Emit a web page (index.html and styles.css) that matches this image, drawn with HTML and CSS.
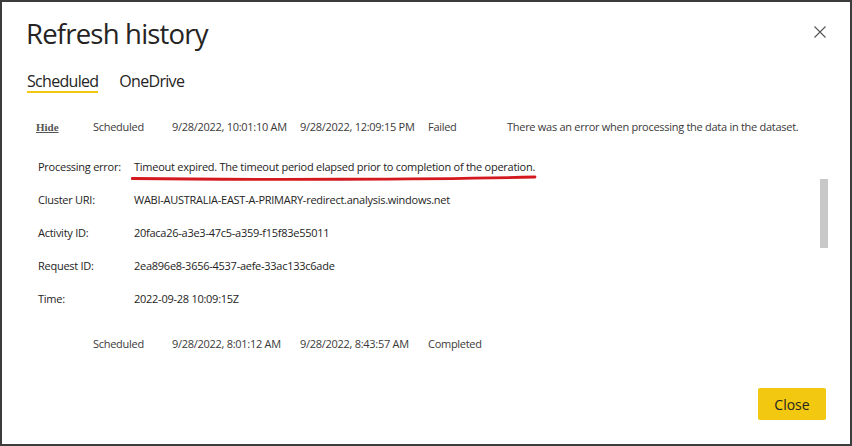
FILE: index.html
```html
<!DOCTYPE html>
<html lang="en">
<head>
<meta charset="utf-8">
<title>Refresh history</title>
<link rel="stylesheet" href="styles.css">
</head>
<body>
<div class="frame">
  <div class="header">
    <h1 class="title">Refresh history</h1>
    <button class="close-x" aria-label="Close">
      <svg width="12" height="12" viewBox="0 0 12 12"><path d="M0.5 0.5 L11.5 11.5 M11.5 0.5 L0.5 11.5" stroke="#555" stroke-width="1.1" fill="none"/></svg>
    </button>
  </div>
  <div class="tabs">
    <span class="tab active">Scheduled</span>
    <span class="tab">OneDrive</span>
  </div>
  <div class="main">
    <div class="list">
      <div class="row">
        <span class="c-hide"><a class="hide">Hide</a></span>
        <span class="c-type">Scheduled</span>
        <span class="c-start">9/28/2022, 10:01:10 AM</span>
        <span class="c-end">9/28/2022, 12:09:15 PM</span>
        <span class="c-status">Failed</span>
        <span class="c-msg">There was an error when processing the data in the dataset.</span>
      </div>
      <div class="details">
        <div class="drow"><span class="dlabel">Processing error:</span><span class="dval err">Timeout expired. The timeout period elapsed prior to completion of the operation.<svg class="scribble" width="410" height="8" viewBox="0 0 410 8"><path d="M1 4.5 C 120 6, 300 5.5, 404 3" stroke="#d3181e" stroke-width="2.8" fill="none" stroke-linecap="round"/></svg></span></div>
        <div class="drow"><span class="dlabel">Cluster URI:</span><span class="dval">WABI-AUSTRALIA-EAST-A-PRIMARY-redirect.analysis.windows.net</span></div>
        <div class="drow"><span class="dlabel">Activity ID:</span><span class="dval">20faca26-a3e3-47c5-a359-f15f83e55011</span></div>
        <div class="drow"><span class="dlabel">Request ID:</span><span class="dval">2ea896e8-3656-4537-aefe-33ac133c6ade</span></div>
        <div class="drow"><span class="dlabel">Time:</span><span class="dval">2022-09-28 10:09:15Z</span></div>
      </div>
      <div class="row row2">
        <span class="c-hide"></span>
        <span class="c-type">Scheduled</span>
        <span class="c-start">9/28/2022, 8:01:12 AM</span>
        <span class="c-end">9/28/2022, 8:43:57 AM</span>
        <span class="c-status">Completed</span>
        <span class="c-msg"></span>
      </div>
    </div>
    <div class="scrollbar"><div class="thumb"></div></div>
  </div>
  <div class="footer">
    <button class="btn-close">Close</button>
  </div>
</div>
</body>
</html>
```

FILE: styles.css
```css
* { box-sizing: border-box; }
html, body { margin: 0; padding: 0; background: #fff; }
body { font-family: "Open Sans", "Noto Sans", sans-serif; color: #333; }

.frame {
  width: 852px;
  height: 446px;
  border: 2px solid #3c3c3c;
  background: #fff;
  display: flex;
  flex-direction: column;
}

.header {
  display: flex;
  justify-content: space-between;
  align-items: flex-start;
  padding: 14px 24px 0 24px;
}
.title {
  margin: 0;
  font-weight: 400;
  font-size: 27.5px;
  line-height: 36px;
  color: #252423;
  letter-spacing: -0.8px;
}
.close-x {
  border: 0;
  background: none;
  padding: 0;
  margin-top: 10px;
  margin-right: 0;
  width: 12px;
  height: 12px;
  display: flex;
}

.tabs {
  display: flex;
  gap: 21px;
  padding-left: 25px;
  margin-top: 19px;
}
.tab {
  font-size: 16px;
  line-height: 20px;
  color: #252423;
  padding-bottom: 0;
  border-bottom: 2px solid transparent;
  letter-spacing: -0.7px;
}
.tab.active { border-bottom-color: #f2c811; }

.main {
  flex: 1;
  display: flex;
}
.list {
  flex: 1;
  padding-top: 26px;
}
.scrollbar {
  width: 8px;
  margin-right: 22px;
}
.thumb {
  margin-top: 86px;
  height: 69px;
  background: #c8c8c8;
}

.row {
  display: grid;
  grid-template-columns: 57px 79px 128px 128px 79px 1fr;
  padding-left: 34px;
  font-size: 11px;
  line-height: 16px;
  letter-spacing: -0.28px;
  color: #3b3a39;
  white-space: nowrap;
}
.row2 { margin-top: 21px; }

.hide {
  font-family: "Liberation Serif", "Times New Roman", serif;
  font-weight: 700;
  font-size: 11px;
  letter-spacing: 0;
  color: #555;
  text-decoration: underline;
  cursor: pointer;
}

.details {
  margin-top: 15px;
  padding-left: 36px;
}
.drow {
  display: grid;
  grid-template-columns: 96px 1fr;
  font-size: 11px;
  line-height: 33px;
  letter-spacing: -0.26px;
  color: #252423;
  white-space: nowrap;
}
.dval { position: relative; }
.scribble {
  position: absolute;
  left: -3px;
  top: 24px;
}

.footer {
  display: flex;
  justify-content: flex-end;
  padding: 0 24px 24px 0;
}
.btn-close {
  width: 68px;
  height: 32px;
  border: 0;
  border-radius: 2px;
  background: #f2c811;
  color: #252423;
  font-family: "Open Sans", "Noto Sans", sans-serif;
  font-size: 14px;
  padding: 0;
}
```
